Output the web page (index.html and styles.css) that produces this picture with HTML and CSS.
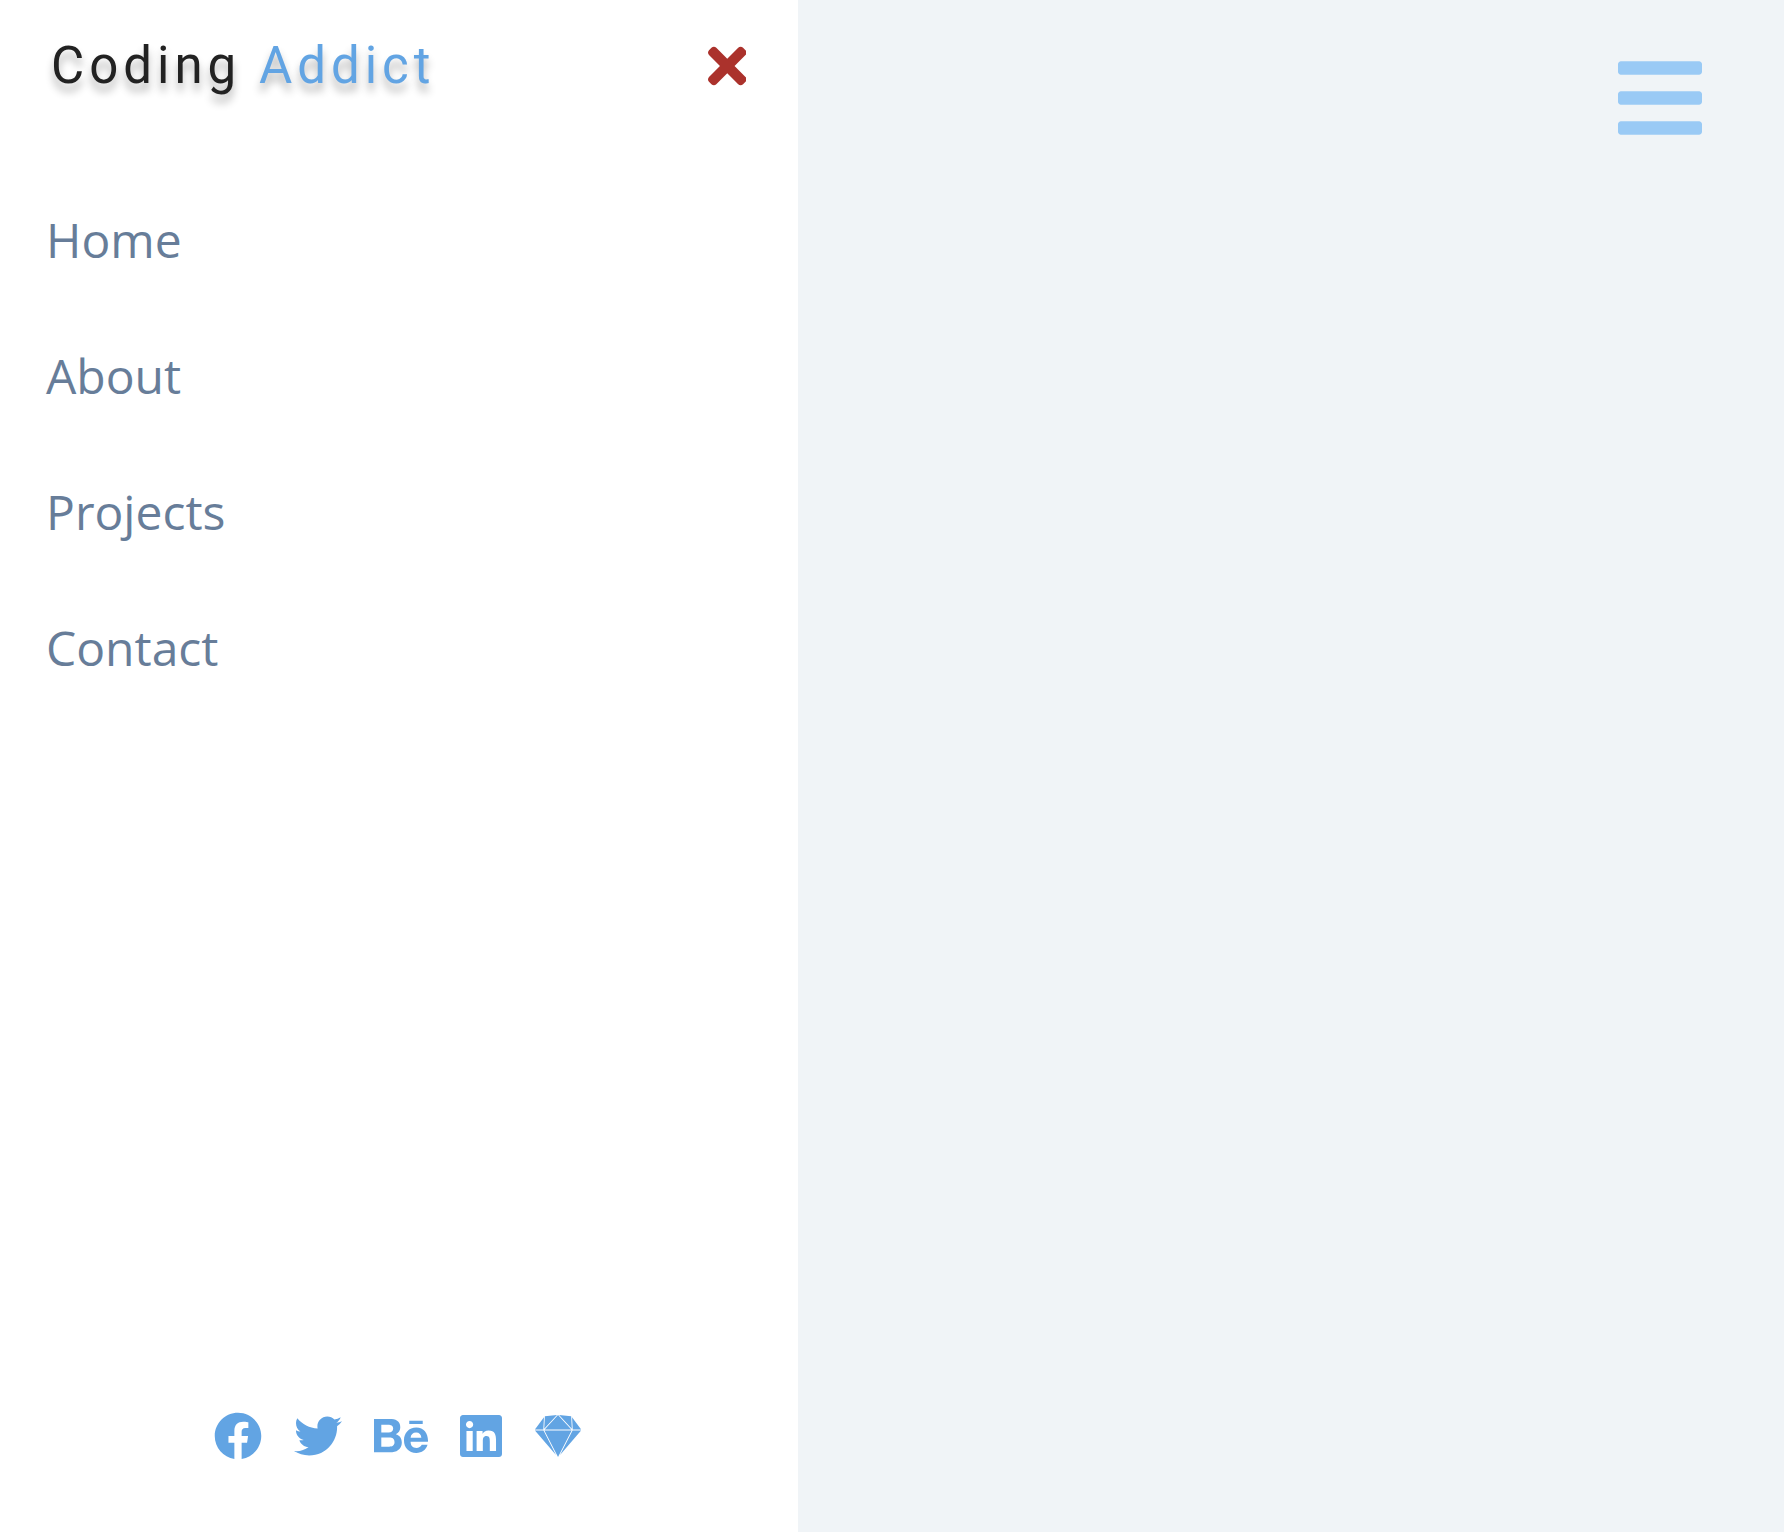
FILE: index.html
```html
<!DOCTYPE html>
<html lang="en">
<head>
  <meta charset="utf-8">
  <meta name="viewport" content="width=device-width, initial-scale=1">
  <title>Coding Addict</title>
  <link rel="stylesheet" href="styles.css">
</head>
<body>
  <div class="layout">
    <aside class="sidebar">
      <header class="sidebar-header">
        <span class="logo">Coding <span class="logo-accent">Addict</span></span>
        <button class="close-btn" type="button" aria-label="Close menu">
          <svg viewBox="0 0 352 512" aria-hidden="true"><path d="M242.72 256l100.07-100.07c12.28-12.28 12.28-32.19 0-44.48l-22.24-22.24c-12.28-12.28-32.19-12.28-44.48 0L176 189.28 75.93 89.21c-12.28-12.28-32.19-12.28-44.48 0L9.21 111.45c-12.28 12.28-12.28 32.19 0 44.48L109.28 256 9.21 356.07c-12.28 12.28-12.28 32.19 0 44.48l22.24 22.24c12.28 12.28 32.2 12.28 44.48 0L176 322.72l100.07 100.07c12.28 12.28 32.2 12.28 44.48 0l22.24-22.24c12.28-12.28 12.28-32.19 0-44.48L242.72 256z"/></svg>
        </button>
      </header>
      <nav>
        <ul class="links">
          <li><a href="#home">Home</a></li>
          <li><a href="#about">About</a></li>
          <li><a href="#projects">Projects</a></li>
          <li><a href="#contact">Contact</a></li>
        </ul>
      </nav>
      <ul class="social-icons">
        <li><a href="#facebook" aria-label="Facebook"><svg viewBox="0 0 512 512" aria-hidden="true"><path d="M504 256C504 119 393 8 256 8S8 119 8 256c0 123.78 90.69 226.38 209.25 245V327.69h-63V256h63v-54.64c0-62.15 37-96.48 93.67-96.48 27.14 0 55.52 4.84 55.52 4.84v61h-31.28c-30.8 0-40.41 19.12-40.41 38.73V256h68.78l-11 71.69h-57.78V501C413.31 482.38 504 379.78 504 256z"/></svg></a></li>
        <li><a href="#twitter" aria-label="Twitter"><svg viewBox="0 0 512 512" aria-hidden="true"><path d="M459.37 151.716c.325 4.548.325 9.097.325 13.645 0 138.72-105.583 298.558-298.558 298.558-59.452 0-114.68-17.219-161.137-47.106 8.447.974 16.568 1.299 25.34 1.299 49.055 0 94.213-16.568 130.274-44.832-46.132-.975-84.792-31.188-98.112-72.772 6.498.974 12.995 1.624 19.818 1.624 9.421 0 18.843-1.3 27.614-3.573-48.081-9.747-84.143-51.98-84.143-102.985v-1.299c13.969 7.797 30.214 12.67 47.431 13.319-28.264-18.843-46.781-51.005-46.781-87.391 0-19.492 5.197-37.36 14.294-52.954 51.655 63.675 129.3 105.258 216.365 109.807-1.624-7.797-2.599-15.918-2.599-24.04 0-57.828 46.782-104.934 104.934-104.934 30.213 0 57.502 12.67 76.67 33.137 23.715-4.548 46.456-13.32 66.599-25.34-7.798 24.366-24.366 44.833-46.132 57.827 21.117-2.273 41.584-8.122 60.426-16.243-14.292 20.791-32.161 39.308-52.628 54.253z"/></svg></a></li>
        <li><a href="#behance" aria-label="Behance"><svg viewBox="0 0 576 512" aria-hidden="true"><path d="M232 237.2c31.8-15.2 48.4-38.2 48.4-74 0-70.6-52.6-87.8-113.3-87.8H0v354.4h171.8c64.4 0 124.9-30.9 124.9-102.9 0-44.5-21.1-77.4-64.7-89.7zM77.9 135.9H151c28.1 0 53.4 7.9 53.4 40.5 0 30.1-19.7 42.2-47.5 42.2h-79v-82.7zm83.3 233.7H77.9V272h84.9c34.3 0 56 14.3 56 50.6 0 35.8-25.9 47-57.6 47zm358.5-240.7H376V94h143.7v34.9zM576 305.2c0-75.9-44.4-139.2-124.9-139.2-78.2 0-131.3 58.8-131.3 135.8 0 79.9 50.3 134.7 131.3 134.7 61.3 0 101-27.6 120.1-86.3H509c-6.7 21.9-34.3 33.5-55.7 33.5-41.3 0-63-24.2-63-65.3h185.1c.3-4.2.6-8.7.6-13.2zM390.4 274c2.3-33.7 24.7-54.8 58.5-54.8 35.4 0 53.2 20.8 56.2 54.8H390.4z"/></svg></a></li>
        <li><a href="#linkedin" aria-label="LinkedIn"><svg viewBox="0 0 448 512" aria-hidden="true"><path d="M416 32H31.9C14.3 32 0 46.5 0 64.3v383.4C0 465.5 14.3 480 31.9 480H416c17.6 0 32-14.5 32-32.3V64.3c0-17.8-14.4-32.3-32-32.3zM135.4 416H69V202.2h66.5V416zm-33.2-243c-21.3 0-38.5-17.3-38.5-38.5S80.9 96 102.2 96c21.2 0 38.5 17.3 38.5 38.5 0 21.3-17.2 38.5-38.5 38.5zm282.1 243h-66.4V312c0-24.8-.5-56.7-34.5-56.7-34.6 0-39.9 27-39.9 54.9V416h-66.4V202.2h63.7v29.2h.9c8.9-16.8 30.6-34.5 62.9-34.5 67.2 0 79.7 44.3 79.7 101.9V416z"/></svg></a></li>
        <li><a href="#sketch" aria-label="Sketch"><svg viewBox="0 0 512 512" aria-hidden="true"><path d="M27.5 162.2L9 187.1h90.5l6.9-130.7-78.9 105.8zM396.3 45.7L267.7 32l135.7 147.2-7.1-133.5zM112.2 218.3l-11.2-22H9.9L234.8 458zm2-31.2h284l-81.5-88.5L256.3 33zm297.3 9.1L277.6 458l224.8-261.7h-90.9zM415.4 69L406 56.4l.9 17.3 6.1 113.4h90.3zM113.5 93.5l-4.6 85.6L244.7 32 116.1 45.7zm287.7 102.7h-290l42.4 82.9L256.3 480l144.9-283.8z"/></svg></a></li>
      </ul>
    </aside>
    <main class="content">
      <button class="menu-btn" type="button" aria-label="Open menu">
        <svg viewBox="0 0 448 512" aria-hidden="true"><path d="M16 132h416c8.837 0 16-7.163 16-16V76c0-8.837-7.163-16-16-16H16C7.163 60 0 67.163 0 76v40c0 8.837 7.163 16 16 16zm0 160h416c8.837 0 16-7.163 16-16v-40c0-8.837-7.163-16-16-16H16c-8.837 0-16 7.163-16 16v40c0 8.837 7.163 16 16 16zm0 160h416c8.837 0 16-7.163 16-16v-40c0-8.837-7.163-16-16-16H16c-8.837 0-16 7.163-16 16v40c0 8.837 7.163 16 16 16z"/></svg>
      </button>
    </main>
  </div>
</body>
</html>
```
FILE: styles.css
```css
* {
  box-sizing: border-box;
  margin: 0;
  padding: 0;
}

body {
  background: #f0f4f7;
  color: #222;
  font-family: "Open Sans", "Noto Sans", sans-serif;
}

ul {
  list-style: none;
}

a {
  text-decoration: none;
}

button {
  background: transparent;
  border: 0;
  cursor: pointer;
}

svg {
  display: block;
  fill: currentColor;
}

.layout {
  display: flex;
  min-height: 100vh;
}

.sidebar {
  display: grid;
  grid-template-rows: auto 1fr auto;
  flex: 0 0 798px;
  max-width: 100%;
  background: #fff;
}

.sidebar-header {
  display: flex;
  justify-content: space-between;
  align-items: center;
  padding: 34px 52px 30px 51px;
}

.logo {
  font-family: Roboto, sans-serif;
  font-size: 51px;
  line-height: 64px;
  letter-spacing: 5px;
  text-shadow: 0 8px 8px rgba(0, 0, 0, 0.3);
}

.logo-accent {
  color: #62a4e3;
}

.close-btn {
  color: #ab322c;
}

.close-btn svg {
  height: 56px;
}

.links {
  padding-top: 44px;
}

.links a {
  display: block;
  padding: 32px 46px;
  color: #677d99;
  font-size: 48px;
  line-height: 72px;
}

.social-icons {
  display: flex;
  justify-content: center;
  gap: 32px;
  padding: 0 2px 72px 0;
}

.social-icons a {
  color: #62a4e3;
}

.social-icons svg {
  height: 48px;
}

.content {
  display: flex;
  flex: 1;
  justify-content: flex-end;
  align-items: flex-start;
  padding: 50px 82px;
}

.menu-btn {
  color: #9acaf5;
}

.menu-btn svg {
  height: 96px;
}
```
